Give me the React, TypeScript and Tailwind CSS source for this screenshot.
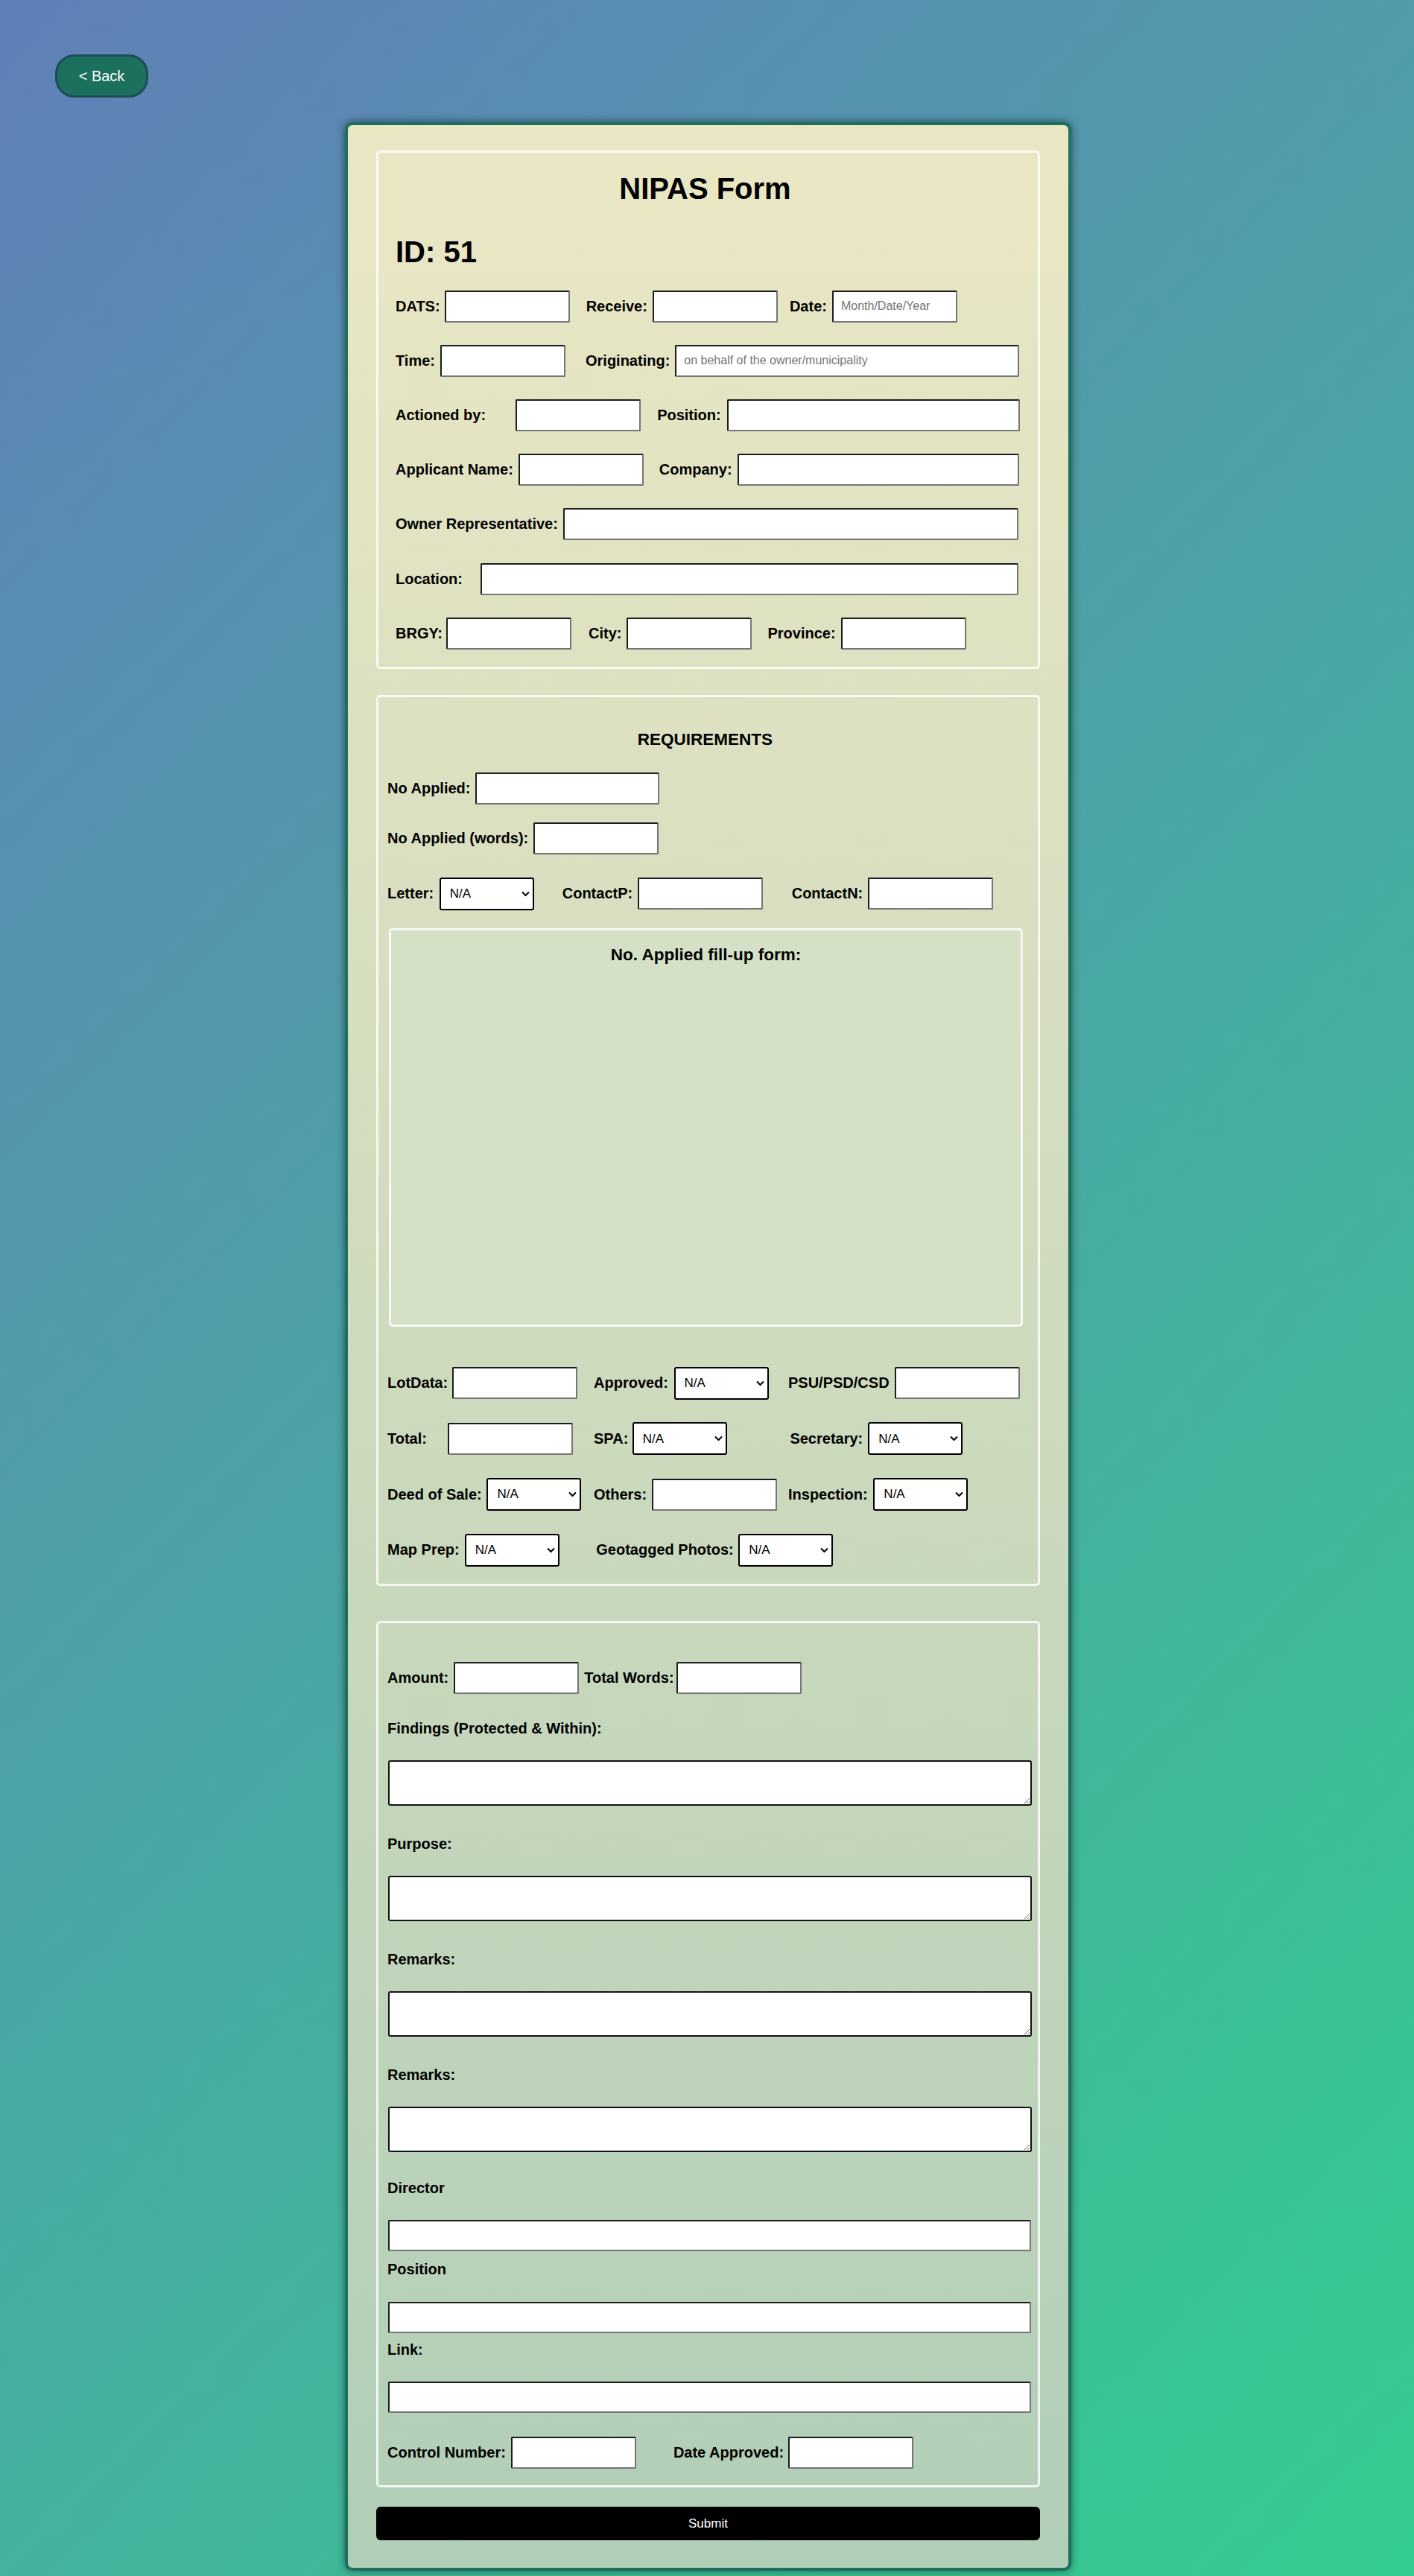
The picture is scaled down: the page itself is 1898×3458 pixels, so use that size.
import React from "react";

const inputBase =
  "shrink-0 bg-white border-2 border-t-[#1c1c1c] border-l-[#1c1c1c] border-r-[#767676] border-b-[#767676] rounded-[2px] px-[10px] text-[16px] font-normal text-black placeholder:text-[#757575] outline-none";

function L({ children, className = "" }: { children: React.ReactNode; className?: string }) {
  return (
    <span className={"shrink-0 whitespace-nowrap text-[20px] font-bold leading-[23px] text-black " + className}>
      {children}
    </span>
  );
}

function Inp({ className = "", placeholder }: { className?: string; placeholder?: string }) {
  return <input type="text" placeholder={placeholder} className={inputBase + " h-[43px] " + className} />;
}

function Sel({ className = "" }: { className?: string }) {
  return (
    <div className={"relative h-[44px] w-[127px] shrink-0 " + className}>
      <select className="h-full w-full appearance-none rounded-[3px] border-2 border-black bg-white pl-[12px] text-[17px] text-black outline-none">
        <option>N/A</option>
      </select>
      <svg
        className="pointer-events-none absolute right-[6px] top-1/2 -translate-y-1/2"
        width="11"
        height="7"
        viewBox="0 0 11 7"
      >
        <path d="M1 1l4.5 4.5L10 1" stroke="#000" strokeWidth="2" fill="none" />
      </svg>
    </div>
  );
}

function Area() {
  return (
    <textarea className="ml-[1px] block h-[61px] w-[864px] rounded-[3px] border-2 border-[#111] bg-white text-[16px] outline-none" />
  );
}

export default function App() {
  return (
    <div className="min-h-[3458px] w-full bg-[linear-gradient(135deg,#6080b8,#33cd8f)] pb-[6px] pt-[73px] font-['Liberation_Sans',Arial,sans-serif] text-black">
      <button className="ml-[74px] block h-[58px] w-[125px] rounded-[26px] border-[3px] border-[#1e4d58] bg-[#1b705e] text-[20px] text-white">
        &lt; Back
      </button>

      <div className="pl-[3px]">
        <div className="mx-auto mt-[33px] w-[975px] rounded-[10px] border-4 border-[#1b705e] bg-[linear-gradient(to_bottom,#ebe7c4,#b1ceb7)] px-[38px] pb-[37px] pt-[34px] shadow-[0_0_12px_rgba(0,0,0,0.5)]">
          {/* Section 1 */}
          <section className="rounded-[5px] border-[3px] border-white/80 pb-[22.7px] pl-[23px] pt-[27.5px]">
            <h1 className="pr-[31px] text-center text-[40px] font-bold leading-[40px]">NIPAS Form</h1>
            <div className="mt-[45px] text-[40px] font-bold leading-[40px]">ID: 51</div>

            <div className="mt-[32.2px] flex flex-col gap-[30.2px]">
              <div className="flex h-[43px] items-center">
                <L>DATS:</L>
                <Inp className="ml-[6px] w-[168px]" />
                <L className="ml-[22px]">Receive:</L>
                <Inp className="ml-[7px] w-[168px]" />
                <L className="ml-[16px]">Date:</L>
                <Inp className="ml-[7px] w-[168px]" placeholder="Month/Date/Year" />
              </div>

              <div className="flex h-[43px] items-center">
                <L>Time:</L>
                <Inp className="ml-[7px] w-[168px]" />
                <L className="ml-[27px]">Originating:</L>
                <Inp className="ml-[7px] w-[462px]" placeholder="on behalf of the owner/municipality" />
              </div>

              <div className="flex h-[43px] items-center">
                <L>Actioned by:</L>
                <Inp className="ml-[40px] w-[168px]" />
                <L className="ml-[22px]">Position:</L>
                <Inp className="ml-[8px] w-[393px]" />
              </div>

              <div className="flex h-[43px] items-center">
                <L>Applicant Name:</L>
                <Inp className="ml-[7px] w-[168px]" />
                <L className="ml-[21px]">Company:</L>
                <Inp className="ml-[7px] w-[378px]" />
              </div>

              <div className="flex h-[43px] items-center">
                <L>Owner Representative:</L>
                <Inp className="ml-[7px] w-[611px]" />
              </div>

              <div className="flex h-[43px] items-center">
                <L>Location:</L>
                <Inp className="ml-[23.5px] w-[722px]" />
              </div>

              <div className="flex h-[43px] items-center">
                <L>BRGY:</L>
                <Inp className="ml-[5px] w-[168px]" />
                <L className="ml-[23px]">City:</L>
                <Inp className="ml-[7px] w-[168px]" />
                <L className="ml-[21px]">Province:</L>
                <Inp className="ml-[7.5px] w-[168px]" />
              </div>
            </div>
          </section>

          {/* Section 2 */}
          <section className="mt-[35.3px] rounded-[5px] border-[3px] border-white/80 pb-[23px] pl-[12px] pr-[20px] pt-[44px]">
            <h2 className="text-center text-[22.5px] font-bold leading-[26px]">REQUIREMENTS</h2>

            <div className="mt-[31px] flex h-[43px] items-center">
              <L>No Applied:</L>
              <Inp className="ml-[7px] w-[247px]" />
            </div>

            <div className="mt-[24px] flex h-[43px] items-center">
              <L>No Applied (words):</L>
              <Inp className="ml-[7px] w-[168px]" />
            </div>

            <div className="mt-[30.7px] flex h-[45px] items-center">
              <L>Letter:</L>
              <Sel className="ml-[7.5px]" />
              <L className="ml-[38px]">ContactP:</L>
              <Inp className="ml-[6.5px] w-[168px]" />
              <L className="ml-[39px]">ContactN:</L>
              <Inp className="ml-[7px] w-[168px]" />
            </div>

            <div className="ml-[2px] mt-[23.7px] h-[535px] w-[851px] rounded-[5px] border-[3px] border-white/80 bg-[#d4e1c7] pt-[19.6px]">
              <h3 className="text-center text-[22.5px] font-bold leading-[26px]">No. Applied fill-up form:</h3>
            </div>

            <div className="mt-[53.6px] flex flex-col gap-[30.7px]">
              <div className="flex h-[44px] items-center">
                <div className="flex w-[277px] shrink-0 items-center">
                  <L>LotData:</L>
                  <Inp className="ml-[6px] w-[168px]" />
                </div>
                <div className="flex w-[261px] shrink-0 items-center">
                  <L>Approved:</L>
                  <Sel className="ml-[7.5px]" />
                </div>
                <div className="flex shrink-0 items-center">
                  <L>PSU/PSD/CSD</L>
                  <Inp className="ml-[7px] w-[168px]" />
                </div>
              </div>

              <div className="flex h-[44px] items-center">
                <div className="flex w-[277px] shrink-0 items-center">
                  <L>Total:</L>
                  <Inp className="ml-[28px] w-[168px]" />
                </div>
                <div className="flex w-[261px] shrink-0 items-center">
                  <L>SPA:</L>
                  <Sel className="ml-[5.5px]" />
                </div>
                <div className="flex shrink-0 items-center">
                  <L className="ml-[2.4px]">Secretary:</L>
                  <Sel className="ml-[7px]" />
                </div>
              </div>

              <div className="flex h-[44px] items-center">
                <div className="flex w-[277px] shrink-0 items-center">
                  <L>Deed of Sale:</L>
                  <Sel className="ml-[6.7px]" />
                </div>
                <div className="flex w-[261px] shrink-0 items-center">
                  <L>Others:</L>
                  <Inp className="ml-[6.4px] w-[168px]" />
                </div>
                <div className="flex shrink-0 items-center">
                  <L>Inspection:</L>
                  <Sel className="ml-[7.7px]" />
                </div>
              </div>

              <div className="flex h-[44px] items-center">
                <div className="flex w-[277px] shrink-0 items-center">
                  <L>Map Prep:</L>
                  <Sel className="ml-[7px]" />
                </div>
                <div className="flex shrink-0 items-center">
                  <L className="ml-[3.3px]">Geotagged Photos:</L>
                  <Sel className="ml-[6.5px]" />
                </div>
              </div>
            </div>
          </section>

          {/* Section 3 */}
          <section className="mt-[47.4px] rounded-[5px] border-[3px] border-white/80 pb-[23px] pl-[12px] pr-[20px] pt-[51.6px]">
            <div className="flex h-[43px] items-center">
              <L>Amount:</L>
              <Inp className="ml-[7px] w-[168px]" />
              <L className="ml-[7px]">Total Words:</L>
              <Inp className="ml-[3px] w-[168px]" />
            </div>

            <div className="mt-[35px]">
              <L className="block">Findings (Protected &amp; Within):</L>
            </div>
            <div className="mt-[31px]">
              <Area />
            </div>

            <div className="mt-[40px]">
              <L className="block">Purpose:</L>
            </div>
            <div className="mt-[31px]">
              <Area />
            </div>

            <div className="mt-[40px]">
              <L className="block">Remarks:</L>
            </div>
            <div className="mt-[31px]">
              <Area />
            </div>

            <div className="mt-[40px]">
              <L className="block">Remarks:</L>
            </div>
            <div className="mt-[31px]">
              <Area />
            </div>

            <div className="mt-[37px]">
              <L className="block">Director</L>
            </div>
            <input type="text" className={inputBase + " ml-[1px] mt-[31px] block h-[42px] w-[863px]"} />

            <div className="mt-[12.8px]">
              <L className="block">Position</L>
            </div>
            <input type="text" className={inputBase + " ml-[1px] mt-[32px] block h-[42px] w-[863px]"} />

            <div className="mt-[11.5px]">
              <L className="block">Link:</L>
            </div>
            <input type="text" className={inputBase + " ml-[1px] mt-[31px] block h-[42.3px] w-[863px]"} />

            <div className="mt-[31.7px] flex h-[42.3px] items-center">
              <L>Control Number:</L>
              <Inp className="ml-[7px] w-[168px]" />
              <L className="ml-[50px]">Date Approved:</L>
              <Inp className="ml-[6px] w-[168px]" />
            </div>
          </section>

          <button className="mt-[26px] block h-[45px] w-full rounded-[6px] bg-black text-[17px] text-white">
            Submit
          </button>
        </div>
      </div>
    </div>
  );
}
